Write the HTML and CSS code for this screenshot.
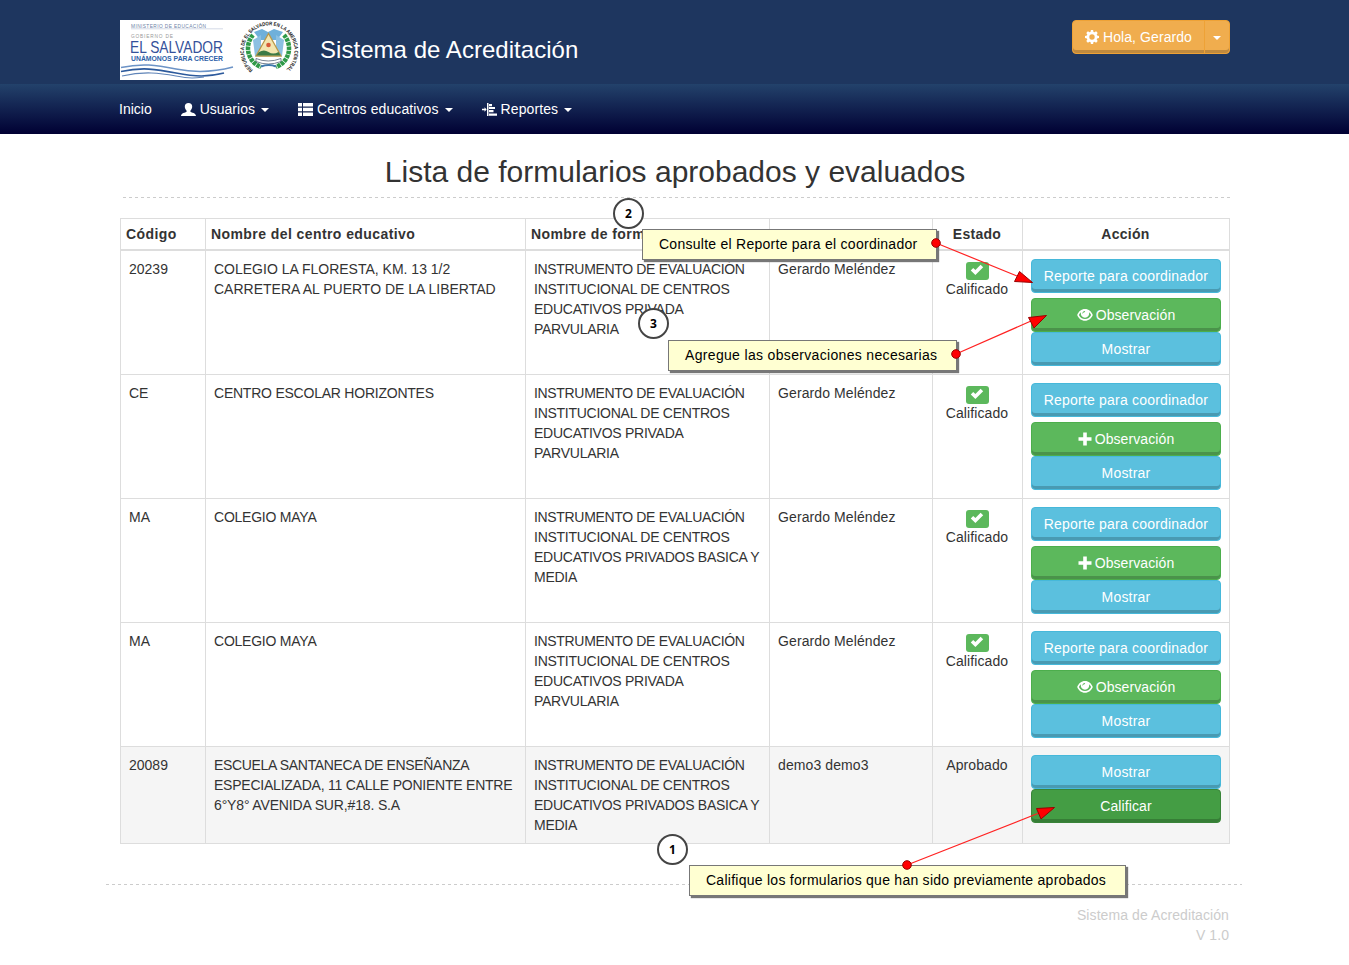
FILE: index.html
```html
<!DOCTYPE html>
<html lang="es">
<head>
<meta charset="utf-8">
<title>Sistema de Acreditación</title>
<link rel="stylesheet" href="styles.css">
</head>
<body>
<svg class="defs" width="0" height="0">
  <symbol id="check" viewBox="0 0 14 12"><path d="M.8 6.400 3.200 3.900 5.400 6.100 10.600.8 13.200 3.300 5.400 11z"/></symbol>
  <symbol id="plus" viewBox="0 0 14 14"><path d="M5.200.5h3.600v4.700h4.700v3.600H8.800v4.700H5.200V8.800H.5V5.200h4.700z"/></symbol>
  <symbol id="eye" viewBox="0 0 16 12"><path fill-rule="evenodd" d="M8 0C4.300 0 1.500 2.600.2 6 1.500 9.400 4.300 11.800 8 11.800S14.500 9.400 15.800 6C14.500 2.600 11.700 0 8 0zM3.900 3.300C3.700 5 4 6.300 4.900 7.300 5.700 8.200 6.800 8.700 8 8.700s2.300-.5 3.100-1.400c.9-1 1.200-2.300 1-4C13 4 13.600 4.900 14.100 6 12.800 8.500 10.800 9.900 8 9.900S3.200 8.500 1.900 6C2.400 4.900 3 4 3.900 3.300zM7.800 2C6.200 2 5.200 3.400 5.500 5 6.100 3.700 6.900 3.200 8.200 3z"/></symbol>
  <symbol id="cog" viewBox="0 0 14 14"><path fill-rule="evenodd" d="M5.900 0h2.200l.4 1.900 1 .4L11.100 1.300l1.600 1.600-1 1.600.4 1 1.900.4v2.200l-1.900.4-.4 1 1 1.600-1.600 1.600-1.600-1-1 .4L8.100 14H5.900l-.4-1.900-1-.4-1.600 1-1.600-1.600 1-1.600-.4-1L0 8.100V5.900l1.900-.4.4-1-1-1.600 1.600-1.600 1.600 1 1-.4zM7 4.300a2.700 2.700 0 1 0 0 5.400 2.700 2.700 0 1 0 0-5.400z"/></symbol>
</svg>

<header class="top">
  <div class="container top-inner">
    <div class="brand">
      <svg class="logo" viewBox="0 0 180 60" width="180" height="60">
        <rect width="180" height="60" fill="#fff"/>
        <g font-family="Liberation Sans, sans-serif">
          <text x="11" y="8" font-size="4.800" fill="#6d7fa6" textLength="75">MINISTERIO DE EDUCACIÓN</text>
          <text x="11" y="18" font-size="4.800" fill="#999" textLength="42">GOBIERNO DE</text>
          <text x="10" y="32.500" font-size="17" fill="#34519a" textLength="93" lengthAdjust="spacingAndGlyphs">EL SALVADOR</text>
          <text x="11" y="41" font-size="6.300" font-weight="bold" fill="#2d5fa8" textLength="92" lengthAdjust="spacingAndGlyphs">UNÁMONOS PARA CRECER</text>
        </g>
        <path d="M11 8.800H103" stroke="#aab6cf" stroke-width=".5"/>
        <g fill="none">
          <path d="M1 47.500C22 43 36 45 56 49S94 52 113 47" stroke="#6c93c6" stroke-width="1.500"/>
          <path d="M1 51.500C22 47 36 49 56 53S88 57 104 53" stroke="#2d5a9c" stroke-width="1.700"/>
          <path d="M2 56C24 51 40 53 56 56S76 58 84 57" stroke="#5f84b8" stroke-width="1.200"/>
        </g>
        <path id="ring" d="M133 50A25.300 25.300 0 1 1 165.500 50" fill="none"/>
        <path d="M133 15A20 20 0 0 0 141 47M164 15A20 20 0 0 1 156 47" fill="none" stroke="#2f9a48" stroke-width="4.500" stroke-dasharray="3.500 .7"/>
        <path d="M134 12l8-3 6 3 6-3 9 3-6 8H140z" fill="#6fb0da"/>
        <path d="M133 20l8-5v21h-6zM164 20l-8-5v21h6z" fill="#8cc0e2"/>
        <path d="M148.500 13.500 161 36H136z" fill="#f3e6b0" stroke="#b89748" stroke-width="1.300"/>
        <path d="M139 32q5-3 9.500 0t10 0l2 3.500h-24z" fill="#3c7a45"/>
        <circle cx="148.500" cy="25" r="2.300" fill="#d65a38"/>
        <path d="M136 38.500q12 5 25 0v3q-13 5-25 0z" fill="#fff" stroke="#567" stroke-width=".8"/>
        <path d="M141 46.500q8-3 15 0" fill="none" stroke="#3f79ad" stroke-width="2"/>
        <text font-family="Liberation Sans, sans-serif" font-size="5.300" font-weight="bold" fill="#222"><textPath href="#ring" textLength="122" lengthAdjust="spacingAndGlyphs">REPUBLICA DE EL SALVADOR EN LA AMERICA CENTRAL</textPath></text>
      </svg>
      <span class="brand-name">Sistema de Acreditación</span>
    </div>
    <div class="user">
      <span class="user-main"><svg width="14" height="14"><use href="#cog"/></svg>Hola, Gerardo</span>
      <span class="user-more"><i class="caret"></i></span>
    </div>
  </div>
</header>

<nav class="nav">
  <div class="container nav-inner">
    <a>Inicio</a>
    <a><svg width="15" height="13" viewBox="0 0 15 13"><path d="M7.500 0C5.200 0 3.800 1.300 3.800 3.500c0 1.700.7 3.200 1.800 4.200v1C4.400 9.700 0 9.800 0 13h15c0-3.200-4.400-3.300-5.600-4.300v-1c1.100-1 1.800-2.500 1.800-4.200C11.200 1.300 9.800 0 7.500 0z"/></svg>Usuarios<i class="caret"></i></a>
    <a class="wide"><svg width="15" height="13" viewBox="0 0 15 13"><path d="M0 0h4v3.500H0zM5 0h10v3.500H5zM0 4.700h4v3.500H0zM5 4.700h10v3.500H5zM0 9.400h4v3.500H0zM5 9.400h10v3.500H5z"/></svg>Centros educativos<i class="caret"></i></a>
    <a class="wide"><svg width="15" height="13" viewBox="0 0 15 13"><path d="M5 0h1.500v13H5zM0 5.800h2.500V4.300l2.200 2.200-2.200 2.200V7.200H0zM7 1h3v2.200H7zM7 4h6v2H7zM7 7h4.500v2.200H7zM7 10.500h8v2.300H7z"/></svg>Reportes<i class="caret"></i></a>
  </div>
</nav>

<main class="container main">
  <h1>Lista de formularios aprobados y evaluados</h1>
  <div class="rule"></div>
  <div class="table">
    <div class="row head"><div>Código</div><div>Nombre del centro educativo</div><div>Nombre de form</div><div></div><div class="c">Estado</div><div class="c">Acción</div></div>
    <div class="row"><div>20239</div><div>COLEGIO LA FLORESTA, KM. 13 1/2<br>CARRETERA AL PUERTO DE LA LIBERTAD</div><div class="form"><span class="tighter">INSTRUMENTO DE EVALUACIÓN</span><br>INSTITUCIONAL DE CENTROS<br>EDUCATIVOS PRIVADA<br>PARVULARIA</div><div class="person">Gerardo Meléndez</div><div class="c">
      <span class="badge"><svg width="14" height="12"><use href="#check"/></svg></span>Calificado</div><div class="acts"><a class="btn info gap">Reporte para coordinador</a><a class="btn ok"><svg width="16" height="12"><use href="#eye"/></svg>Observación</a><a class="btn info">Mostrar</a></div></div>
    <div class="row"><div>CE</div><div class="tight">CENTRO ESCOLAR HORIZONTES</div><div class="form"><span class="tighter">INSTRUMENTO DE EVALUACIÓN</span><br>INSTITUCIONAL DE CENTROS<br>EDUCATIVOS PRIVADA<br>PARVULARIA</div><div class="person">Gerardo Meléndez</div><div class="c">
      <span class="badge"><svg width="14" height="12"><use href="#check"/></svg></span>Calificado</div><div class="acts"><a class="btn info gap">Reporte para coordinador</a><a class="btn ok"><svg width="14" height="14"><use href="#plus"/></svg>Observación</a><a class="btn info">Mostrar</a></div></div>
    <div class="row"><div>MA</div><div class="tight">COLEGIO MAYA</div><div class="form"><span class="tighter">INSTRUMENTO DE EVALUACIÓN</span><br>INSTITUCIONAL DE CENTROS<br>EDUCATIVOS PRIVADOS BASICA Y<br>MEDIA</div><div class="person">Gerardo Meléndez</div><div class="c">
      <span class="badge"><svg width="14" height="12"><use href="#check"/></svg></span>Calificado</div><div class="acts"><a class="btn info gap">Reporte para coordinador</a><a class="btn ok"><svg width="14" height="14"><use href="#plus"/></svg>Observación</a><a class="btn info">Mostrar</a></div></div>
    <div class="row"><div>MA</div><div class="tight">COLEGIO MAYA</div><div class="form"><span class="tighter">INSTRUMENTO DE EVALUACIÓN</span><br>INSTITUCIONAL DE CENTROS<br>EDUCATIVOS PRIVADA<br>PARVULARIA</div><div class="person">Gerardo Meléndez</div><div class="c">
      <span class="badge"><svg width="14" height="12"><use href="#check"/></svg></span>Calificado</div><div class="acts"><a class="btn info gap">Reporte para coordinador</a><a class="btn ok"><svg width="16" height="12"><use href="#eye"/></svg>Observación</a><a class="btn info">Mostrar</a></div></div>
    <div class="row last"><div>20089</div><div class="tight"><span class="tighter">ESCUELA SANTANECA DE ENSEÑANZA</span><br>ESPECIALIZADA, 11 CALLE PONIENTE ENTRE<br><span class="loose">6°Y8° AVENIDA SUR,#18. S.A</span></div><div class="form"><span class="tighter">INSTRUMENTO DE EVALUACIÓN</span><br>INSTITUCIONAL DE CENTROS<br>EDUCATIVOS PRIVADOS BASICA Y<br>MEDIA</div><div class="person">demo3 demo3</div><div class="c">Aprobado</div><div class="acts"><a class="btn info">Mostrar</a><a class="btn ok hover">Calificar</a></div></div>
  </div>
</main>

<footer class="footer">
  <div class="rule"></div>
  <p>Sistema de Acreditación<br>V 1.0</p>
</footer>

<!-- Step-by-step annotations floating over the page -->
<span class="step s2">2</span>
<span class="step s3">3</span>
<span class="step s1">1</span>
<div class="note t2">Consulte el Reporte para el coordinador</div>
<div class="note t3">Agregue las observaciones necesarias</div>
<div class="note t1">Califique los formularios que han sido previamente aprobados</div>
<svg class="arrows" width="1349" height="965">
  <g stroke="#f22" stroke-width="1.200"><path d="M936 243 1017 276M956 354 1031 321M907 865 1039 813"/></g>
  <g fill="#f00" stroke="#900" stroke-width="1">
    <path d="M1032.500 282.500 1019.500 271.500 1014.500 281.500zM1046.500 315.500 1028.500 317.500 1034 328zM1054.500 807.500 1036.500 808.500 1041 819z"/>
    <circle cx="936" cy="243" r="4.300"/><circle cx="956" cy="354" r="4.300"/><circle cx="907" cy="865" r="4.300"/>
  </g>
</svg>
</body>
</html>
```
FILE: styles.css
```css
* { box-sizing: border-box; }
body { margin: 0; background: #fff; color: #333; font: 14px/20px "Liberation Sans", Arial, sans-serif; height: 965px; position: relative; overflow: hidden; }
.defs { position: absolute; }
svg { fill: currentColor; }
.container { width: 1110px; margin-left: 120px; }
.top { height: 84px; background: #1e365f; color: #fff; }
.top-inner { display: flex; justify-content: space-between; padding-top: 20px; }
.brand { display: flex; gap: 20px; align-items: center; height: 60px; }
.logo { display: block; }
.brand-name { font-size: 24px; line-height: 30px; letter-spacing: .04px; }
.user { display: flex; height: 34px; color: #fff; background: #f0ad4e; border: 1px solid #eea236; border-radius: 4px; box-shadow: inset 0 -3px #c08a3e; }
.user-main { display: flex; align-items: center; gap: 4px; width: 132px; padding-left: 12px; border-right: 1px solid #eea236; letter-spacing: .08px; }
.user-more { display: flex; align-items: center; justify-content: center; width: 24px; padding-top: 2px; }
.caret { display: inline-block; border: 4px solid transparent; border-top-color: currentColor; border-bottom: 0; }
.nav { height: 50px; background: linear-gradient(#23426b, #000033); color: #fff; }
.nav-inner { display: flex; height: 50px; align-items: center; gap: 29px; margin-left: 119px; }
.nav a { display: flex; align-items: center; gap: 4px; }
.nav .wide { letter-spacing: .1px; }
.nav .caret { margin: 2px 0 0 2px; }
.main { padding-top: 20px; }
h1 { margin: 0; font-size: 30px; line-height: 36px; font-weight: 400; text-align: center; height: 43px; }
.rule { height: 1px; background: repeating-linear-gradient(90deg, #ccc 0 3px, transparent 3px 6px); }
.main .rule { margin-left: 3px; }
.table { margin-top: 20px; border-top: 1px solid #ddd; border-right: 1px solid #ddd; }
.row { display: grid; grid-template-columns: 85px 320px 244px 163px 90px 207px; height: 124px; border-bottom: 1px solid #ddd; }
.row > div { border-left: 1px solid #ddd; padding: 8px 0 0 8px; white-space: nowrap; }
.row.head { height: 32px; border-bottom-width: 2px; font-weight: 700; letter-spacing: .42px; }
.row.head > div { padding: 5px 0 0 5px; }
.row.last { height: 97px; background: #f5f5f5; }
.row > .c, .row.head > .c { text-align: center; padding-left: 0; padding-right: 1px; }
.c { letter-spacing: .1px; }
.row.head .c { letter-spacing: .3px; }
.form { letter-spacing: -.26px; }
.tight { letter-spacing: -.23px; }
.tighter { letter-spacing: -.33px; }
.loose { letter-spacing: -.15px; }
.person { letter-spacing: .1px; }
.badge { display: flex; align-items: center; justify-content: center; width: 23px; height: 18px; margin: 3px auto -1px; border-radius: 3px; background: #5cb85c; color: #fff; }
.badge svg { margin-bottom: 2px; }
.row > .acts { padding-right: 8px; }
.btn { display: flex; align-items: center; justify-content: center; gap: 3px; height: 34px; border: 1px solid; border-radius: 4px; letter-spacing: .2px; }
.btn.gap { margin-bottom: 5px; }
.info { background: #5bc0de; box-shadow: inset 0 -3px #499ab2; }
.ok { background: #5cb85c; box-shadow: inset 0 -3px #4a934a; }
.hover { background: #449d44; box-shadow: inset 0 -3px #367e36; }
.acts .btn { color: #fff; }
.btn.info { border-color: #46b8da; }
.btn.ok { border-color: #4cae4c; letter-spacing: .1px; }
.btn.hover { border-color: #398439; }
.footer { margin: 40px 107px 0 106px; }
.footer p { margin: 20px 13px 0 0; text-align: right; color: #ccc; letter-spacing: .08px; }
.step { position: absolute; display: flex; align-items: center; justify-content: center; width: 31px; height: 31px; border: 2px solid #444; border-radius: 50%; background: #fff; color: #000; font: bold 12px "Noto Sans", sans-serif; }
.s2 { left: 613px; top: 198px; }
.s3 { left: 638px; top: 308px; }
.s1 { left: 657px; top: 834px; }
.note { position: absolute; height: 31px; line-height: 28px; border: 1px solid #777; background: #ffffd2; color: #000; box-shadow: 2px 2px 1px #777; padding-left: 16px; white-space: nowrap; }
.t2 { left: 642px; top: 229px; width: 295px; letter-spacing: .26px; }
.t3 { left: 668px; top: 340px; width: 289px; letter-spacing: .33px; }
.t1 { left: 689px; top: 865px; width: 437px; letter-spacing: .26px; }
.arrows { position: absolute; left: 0; top: 0; }
```
